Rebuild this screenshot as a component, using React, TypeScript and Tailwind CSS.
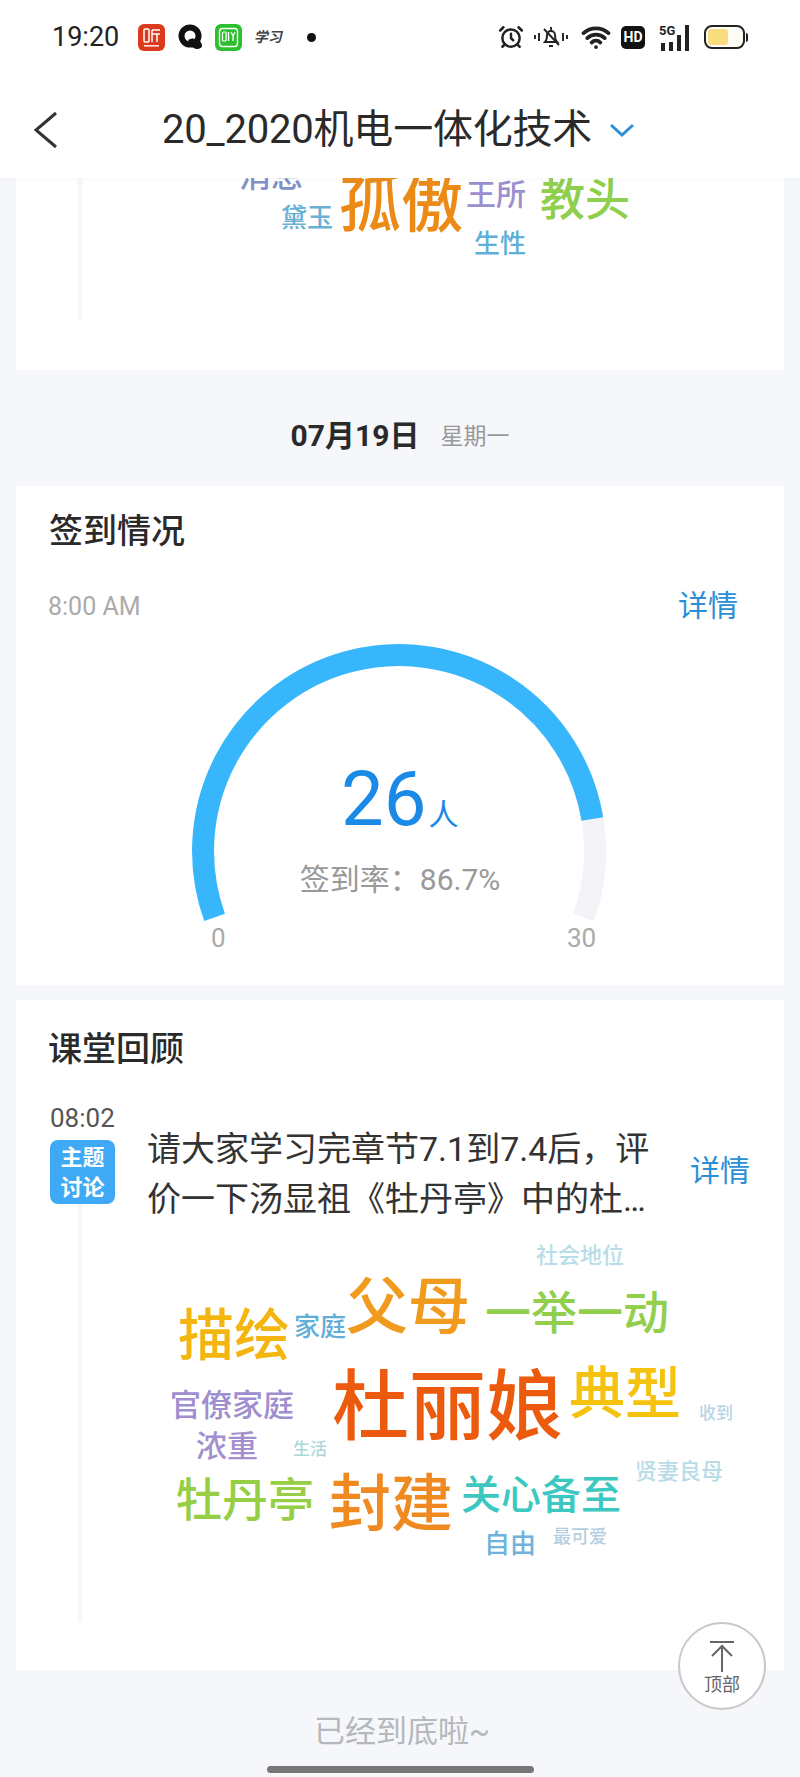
import React from 'react';
import { AlarmClock, Wifi } from 'lucide-react';

interface Word {
  text: string;
  className: string;
}

// word cloud under the class review, sized and coloured by frequency
const reviewWords: Word[] = [
  { text: '社会地位', className: 'left-[520px] top-[2px] text-[22px] text-[#b8dce8]' },
  { text: '父母', className: 'left-[330px] top-[34px] text-[62px] text-[#f09a1e]' },
  { text: '一举一动', className: 'left-[469px] top-[47px] text-[46px] text-[#92cf4e]' },
  { text: '描绘', className: 'left-[162px] top-[65px] text-[56px] text-[#f5b50f]' },
  { text: '家庭', className: 'left-[278px] top-[71px] text-[26px] text-[#62aed8]' },
  { text: '杜丽娘', className: 'left-[316px] top-[127px] text-[77px] text-[#ec5a0d]' },
  { text: '典型', className: 'left-[553px] top-[123px] text-[56px] text-[#f5c20f]' },
  { text: '收到', className: 'left-[683px] top-[162px] text-[17px] text-[#b5d5e6]' },
  { text: '官僚家庭', className: 'left-[154px] top-[147px] text-[31px] text-[#a08fd0]' },
  { text: '浓重', className: 'left-[180px] top-[188px] text-[31px] text-[#a28fd0]' },
  { text: '生活', className: 'left-[277px] top-[198px] text-[17px] text-[#a8d8dc]' },
  { text: '贤妻良母', className: 'left-[619px] top-[218px] text-[22px] text-[#b8dbe8]' },
  { text: '牡丹亭', className: 'left-[160px] top-[234px] text-[46px] text-[#96cf45]' },
  { text: '封建', className: 'left-[313px] top-[231px] text-[62px] text-[#f08a20]' },
  { text: '关心备至', className: 'left-[445px] top-[233px] text-[40px] text-[#3cc8c0]' },
  { text: '自由', className: 'left-[468px] top-[288px] text-[26px] text-[#6db3dc]' },
  { text: '最可爱', className: 'left-[537px] top-[285px] text-[18px] text-[#b5cfe0]' },
];

const previousWords: Word[] = [
  { text: '消息', className: 'left-[223px] top-[-18px] text-[32px] text-[#8090c8]' },
  { text: '孤傲', className: 'left-[323px] top-[-3px] text-[62px] text-[#ec8a16]' },
  { text: '王所', className: 'left-[450px] top-[2px] text-[30px] text-[#9b8fd0]' },
  { text: '教头', className: 'left-[524px] top-[0px] text-[45px] text-[#8fcf4e]' },
  { text: '黛玉', className: 'left-[265px] top-[27px] text-[26px] text-[#6bb0d5]' },
  { text: '生性', className: 'left-[458px] top-[53px] text-[26px] text-[#5fb0d8]' },
];

const WordCloud: React.FC<{ words: Word[] }> = ({ words }) => (
  <>
    {words.map((w) => (
      <span key={w.text} className={`absolute leading-none whitespace-nowrap font-medium ${w.className}`}>
        {w.text}
      </span>
    ))}
  </>
);

const StatusBar = () => (
  <div className="h-[65px] flex items-center pt-[9px] relative">
    <span className="ml-[52px] text-[27px] leading-none text-[#222]">19:20</span>
    {/* notification icons */}
    <svg className="ml-[19px]" width="27" height="27" viewBox="0 0 27 27">
      <rect width="27" height="27" rx="6" fill="#dc3a1c" />
      <rect x="6" y="5" width="5" height="13" rx="1" fill="none" stroke="#fff" strokeWidth="1.5" />
      <path d="M14 6h8M14 6v12M14 10h8M19 10v8" fill="none" stroke="#fff" strokeWidth="1.5" />
      <rect x="6" y="21" width="15" height="1.6" fill="#fff" opacity="0.85" />
    </svg>
    <svg className="ml-[13px]" width="26" height="26" viewBox="0 0 26 26">
      <circle cx="12" cy="12" r="8.5" fill="none" stroke="#111" strokeWidth="6" />
      <path d="M10 16c3-2 6-2 8 0 3 0 6 2 6 6 0 2-3 3-5 3-4 0-7-4-9-9z" fill="#111" />
    </svg>
    <svg className="ml-[11px]" width="27" height="27" viewBox="0 0 27 27">
      <rect width="27" height="27" rx="6" fill="#2cc02e" />
      <rect x="4.5" y="4.5" width="18" height="18" rx="3" fill="none" stroke="#fff" strokeWidth="1.4" />
      <rect x="7.5" y="8" width="3.6" height="9" rx="1" fill="none" stroke="#fff" strokeWidth="1.2" />
      <path d="M13.5 8v9M16 8l2 4 2-4M18 12v5" fill="none" stroke="#fff" strokeWidth="1.3" />
    </svg>
    <span className="ml-[13px] w-[28px] text-[14px] leading-none whitespace-nowrap font-bold text-[#444] -skew-x-12">学习</span>
    <span className="ml-[24px] w-[9px] h-[9px] rounded-full bg-[#111]" />

    <div className="ml-auto mr-[52px] flex items-center">
      <AlarmClock size={26} strokeWidth={2.3} className="text-[#222]" />
      <svg className="ml-[9px]" width="36" height="26" viewBox="0 0 36 26" fill="none" stroke="#222" strokeWidth="1.9">
        <path d="M12 18c2-2 2-4 2-7a4 4 0 0 1 8 0c0 3 0 5 2 7z" />
        <path d="M16 22h4M18 3v3M2 11v4M6 9v8M34 11v4M30 9v8M11 5l15 16" />
      </svg>
      <Wifi size={30} strokeWidth={3} className="ml-[12px] text-[#222]" />
      <span className="ml-[10px] w-[24px] h-[23px] rounded-[5px] bg-[#111] text-white text-[14px] font-bold leading-[23px] text-center">HD</span>
      <div className="relative ml-[14px] w-[33px] h-[27px] flex items-end gap-[4px] pl-[2px]">
        <span className="absolute left-0 top-0 text-[13px] leading-none font-bold text-[#222]">5G</span>
        <span className="w-[4px] h-[8px] bg-[#222]" />
        <span className="w-[4px] h-[9px] bg-[#222]" />
        <span className="w-[4px] h-[16px] bg-[#222]" />
        <span className="w-[4px] h-[26px] bg-[#222]" />
      </div>
      <div className="ml-[12px] flex items-center">
        <div className="w-[41px] h-[24px] rounded-[8px] border-2 border-[#222] bg-[#fdfcf4] p-[2px]">
          <div className="w-[20px] h-full rounded-[3px] bg-[#f8dc7e]" />
        </div>
        <span className="ml-[1px] w-[2px] h-[9px] rounded-r bg-[#222]" />
      </div>
    </div>
  </div>
);

const Header = () => (
  <header className="relative z-10 bg-white shadow-[0_2px_6px_rgba(120,130,150,0.05)]">
    <StatusBar />
    <div className="h-[113px] flex items-center pt-[17px]">
      <svg className="ml-[33px]" width="25" height="38" viewBox="0 0 25 38" fill="none" stroke="#333" strokeWidth="3">
        <path d="M23 2L3 19l20 17" />
      </svg>
      <h1 className="ml-[104px] text-[40px] leading-none tracking-[-0.2px] whitespace-nowrap text-[#2a2a2a]">20_2020机电一体化技术</h1>
      <svg className="ml-[16px]" width="28" height="16" viewBox="0 0 28 16" fill="none" stroke="#2b8fd6" strokeWidth="3">
        <path d="M3 3l11 10L25 3" />
      </svg>
    </div>
  </header>
);

const Gauge = () => (
  <div className="relative w-[440px] h-[349px] mx-auto">
    <svg width="440" height="349" viewBox="0 0 440 349" fill="none" strokeWidth="22">
      <path d="M412.4 183A196 196 0 0 1 403.4 281.4" stroke="#f3f3f8" />
      <path d="M34.6 281.4A196 196 0 1 1 412.4 183" stroke="#38b6fb" />
    </svg>
    <div className="absolute left-[161px] top-[125px] flex items-baseline text-[#1a8ae6]">
      <span className="text-[76px] leading-none">26</span>
      <span className="ml-[2px] text-[30px] leading-none">人</span>
    </div>
    <p className="absolute inset-x-0 top-[231px] text-center text-[30px] leading-[26px] text-[#999]">签到率：86.7%</p>
    <span className="absolute left-[31px] top-[289px] text-[26px] leading-[26px] text-[#aaa]">0</span>
    <span className="absolute left-[387px] top-[289px] text-[26px] leading-[26px] text-[#aaa]">30</span>
  </div>
);

export default function App() {
  return (
    <div className="relative h-[1777px] w-[800px] overflow-hidden bg-[#f5f7fb] [font-family:Roboto,'Noto_Sans_CJK_SC',sans-serif]">
      <Header />

      {/* tail of the previous day's card, scrolled under the header */}
      <section className="relative mx-[16px] h-[192px] overflow-hidden bg-white">
        <span className="absolute left-[62px] top-0 h-[142px] w-[4px] bg-[#f6f7fa]" />
        <WordCloud words={previousWords} />
      </section>

      <div className="h-[116px] flex items-center justify-center pt-[16px]">
        <span className="text-[30px] leading-none font-bold text-[#2a2a2a]">07月19日</span>
        <span className="ml-[21px] text-[23px] leading-none text-[#999]">星期一</span>
      </div>

      <section className="mx-[16px] h-[499px] bg-white pt-[28px]">
        <h2 className="pl-[33px] text-[34px] leading-[34px] font-medium text-[#2a2a2a]">签到情况</h2>
        <div className="mt-[42px] h-[32px] pl-[32px] pr-[46px] flex items-center justify-between">
          <span className="text-[25px] leading-none text-[#aaa]">8:00 AM</span>
          <span className="text-[30px] leading-none text-[#2b8fd6]">详情</span>
        </div>
        <div className="mt-[14px]">
          <Gauge />
        </div>
      </section>

      <section className="relative mt-[15px] mx-[16px] h-[670px] bg-white pt-[32px]">
        <h2 className="pl-[32px] text-[34px] leading-[34px] font-medium text-[#2a2a2a]">课堂回顾</h2>
        <span className="absolute left-[62px] top-[204px] h-[418px] w-[4px] bg-[#f6f7fa]" />

        <div className="mt-[39px] pl-[34px] pr-[34px] flex">
          <div className="w-[65px] shrink-0">
            <p className="text-[26px] leading-[26px] text-[#555]">08:02</p>
            <div className="mt-[9px] h-[64px] rounded-[8px] bg-[#3fa9f5] text-center text-[22px] leading-[30px] font-bold text-white pt-[3px]">
              主题<br />讨论
            </div>
          </div>
          <p className="ml-[32px] mt-[19px] w-[510px] text-[34px] leading-[50px] text-[#333] line-clamp-2">
            请大家学习完章节7.1到7.4后，评价一下汤显祖《牡丹亭》中的杜丽娘
          </p>
          <span className="ml-auto mt-[51px] text-[30px] leading-[30px] text-[#2b8fd6]">详情</span>
        </div>

        <div className="relative mt-[19px] h-[340px]">
          <WordCloud words={reviewWords} />
        </div>
      </section>

      <p className="mt-[46px] pl-[314px] text-[31px] leading-none text-[#b5b8bc]">已经到底啦~</p>

      {/* floating back-to-top button */}
      <button className="absolute left-[678px] top-[1622px] w-[88px] h-[88px] rounded-full border-2 border-[#c8c8c8] bg-white flex flex-col items-center justify-center pt-[3px] text-[#666]">
        <svg width="28" height="34" viewBox="0 0 28 34" fill="none" stroke="#666" strokeWidth="2">
          <path d="M2 2h24M14 32V5M4 16L14 6l10 10" />
        </svg>
        <span className="text-[18px] leading-[22px]">顶部</span>
      </button>

      <div className="absolute left-[267px] top-[1766px] w-[267px] h-[7px] rounded-full bg-[#777]" />
    </div>
  );
}
